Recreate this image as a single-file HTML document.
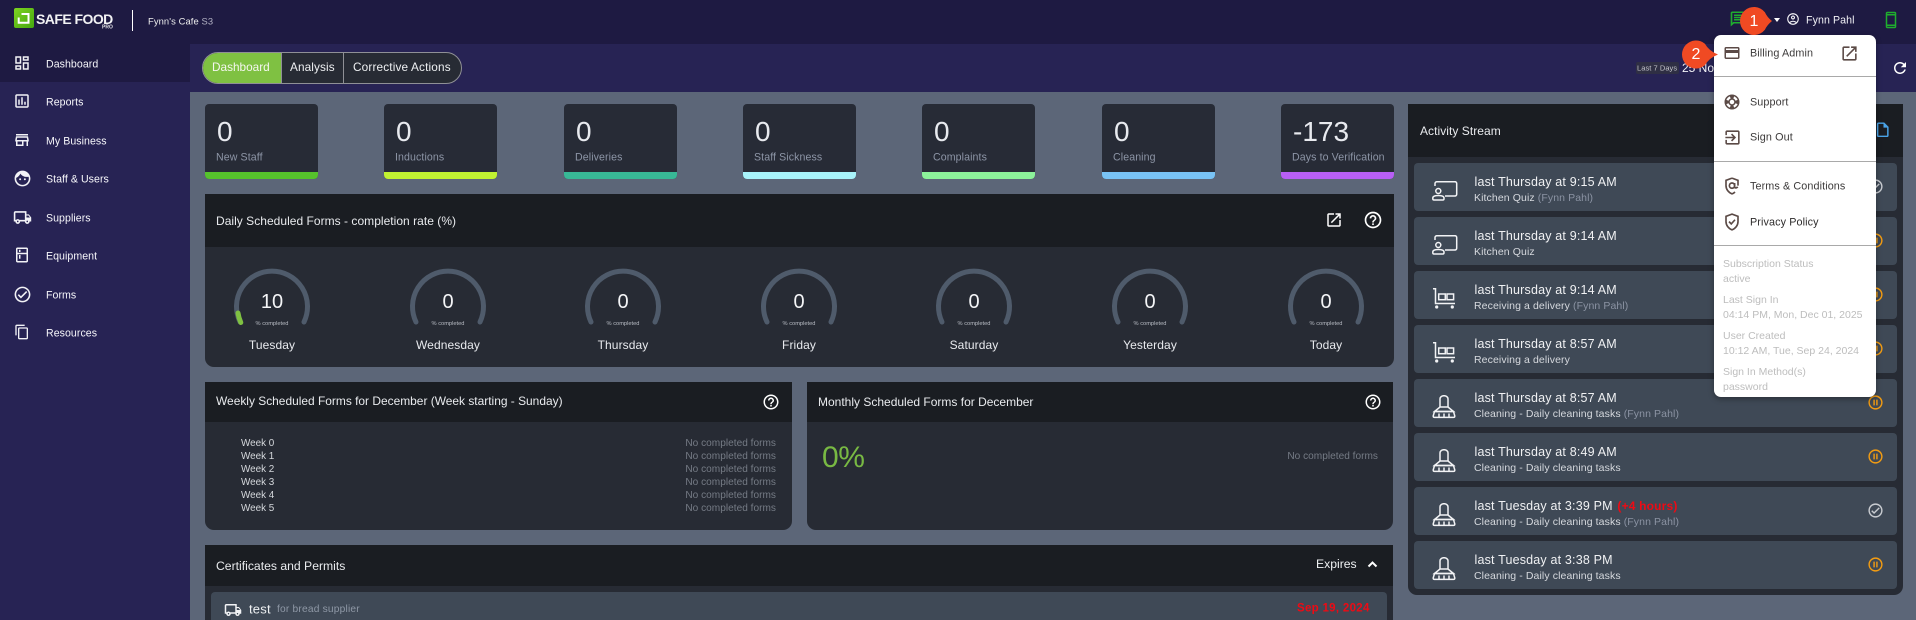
<!DOCTYPE html>
<html lang="en"><head><meta charset="utf-8"><title>Safe Food Pro Dashboard</title>
<style>
*{box-sizing:border-box}
html,body{margin:0;padding:0;width:1916px;height:620px;overflow:hidden;background:#5c6678;font-family:"Liberation Sans",Arial,sans-serif;color:#fff}
.a{position:absolute}
.t{position:absolute;white-space:nowrap;line-height:1;transform:translateY(-50%)}
svg.i{position:absolute;fill:currentColor;overflow:visible}
.nav{font-size:10.6px;font-weight:400;color:#f6f6fa;left:46px;letter-spacing:.05px}
.stat{position:absolute;top:104px;width:113px;height:75px;background:#272b36;border-radius:4px;overflow:hidden}
.stat b{position:absolute;left:0;right:0;bottom:0;height:7px}
.stat .n{font-size:28px;left:12px;top:28px;color:#e8eaef;font-weight:400}
.stat .l{font-size:10.6px;left:11px;top:54px;color:#8d95a6;letter-spacing:.1px}
.head{position:absolute;background:#1a1d22}
.body{position:absolute;background:#272b34;border-radius:0 0 9px 9px}
.title{font-size:12px;color:#e9ebee}
.g{position:absolute;top:260px;width:100px;height:100px}
.gn{font-size:20px;color:#f4f5f7;top:302px;transform:translate(-50%,-50%)}
.gs{font-size:5.7px;color:#b8bcc4;top:325px;transform:translate(-50%,-50%)}
.gd{font-size:12px;color:#e8eaee;top:345px;letter-spacing:.1px;transform:translate(-50%,-50%)}
.wk{font-size:9.9px;left:241px;color:#d5d8dc}
.nc{font-size:10.1px;color:#757b85;letter-spacing:.02px}
.row{position:absolute;left:1414px;width:483px;height:48px;background:#3f4956;border-radius:4px}
.row .t1{position:absolute;white-space:nowrap;left:60.5px;top:12px;font-size:12.5px;line-height:14px;letter-spacing:.18px;color:#f0f1f3}
.row .t2{position:absolute;white-space:nowrap;left:60px;top:29px;font-size:10.5px;line-height:13px;color:#d6d9de;letter-spacing:.1px}
.row .t2 i{font-style:normal;color:#8b93a3}
.row .ic{position:absolute;fill:none;stroke:#f2f3f5;stroke-width:1.5;overflow:visible}
.ic.q{left:18px;top:18px;width:26px;height:22px}
.ic.c{left:18.7px;top:17px;width:22px;height:21px}
.ic.b{left:18px;top:16px;width:24px;height:24px}
.row .st{position:absolute;left:452.5px;top:14.5px;width:17px;height:17px;fill:#c9ccd1}
.row .st.p{fill:#f39c12}
.mi{font-size:10.8px;color:#3c3a3a;left:1750px;letter-spacing:.1px}
.ms{position:absolute;fill:#5b4a46}
.hr{position:absolute;left:1714px;width:162px;height:1px;background:#a9a9a9}
.gy{font-size:10.5px;color:#bdbdbd;left:1723px;letter-spacing:0}
</style></head><body>
<svg width="0" height="0" style="position:absolute"><defs>
<symbol id="help" viewBox="0 0 24 24"><path d="M11 18h2v-2h-2v2zm1-16C6.480 2 2 6.480 2 12s4.480 10 10 10 10-4.480 10-10S17.520 2 12 2zm0 18c-4.410 0-8-3.590-8-8s3.590-8 8-8 8 3.590 8 8-3.590 8-8 8zm0-14c-2.210 0-4 1.790-4 4h2c0-1.100.9-2 2-2s2 .9 2 2c0 2-3 1.750-3 5h2c0-2.250 3-2.500 3-5 0-2.210-1.790-4-4-4z"/></symbol>
<symbol id="pause" viewBox="0 0 24 24"><path d="M9 16h2V8H9v8zm3-14C6.480 2 2 6.480 2 12s4.480 10 10 10 10-4.480 10-10S17.520 2 12 2zm0 18c-4.410 0-8-3.590-8-8s3.590-8 8-8 8 3.590 8 8-3.590 8-8 8zm1-4h2V8h-2v8z"/></symbol>
<symbol id="check" viewBox="0 0 24 24"><path d="M12 2C6.480 2 2 6.480 2 12s4.480 10 10 10 10-4.480 10-10S17.520 2 12 2zm0 18c-4.410 0-8-3.590-8-8s3.590-8 8-8 8 3.590 8 8-3.590 8-8 8zm4.590-12.420L10 14.170l-2.590-2.580L6 13l4 4 8-8z"/></symbol>
<symbol id="ext" viewBox="0 0 24 24"><path d="M19 19H5V5h7V3H5c-1.110 0-2 .9-2 2v14c0 1.100.89 2 2 2h14c1.100 0 2-.9 2-2v-7h-2v7zM14 3v2h3.590l-9.830 9.830 1.410 1.410L19 6.410V10h2V3h-7z"/></symbol>
<symbol id="truck" viewBox="0 0 24 24"><path d="M20 8h-3V4H3c-1.100 0-2 .9-2 2v11h2c0 1.660 1.340 3 3 3s3-1.340 3-3h6c0 1.660 1.340 3 3 3s3-1.340 3-3h2v-5l-3-4zm-.5 1.500l1.960 2.500H17V9.500h2.500zM6 18c-.55 0-1-.45-1-1s.45-1 1-1 1 .45 1 1-.45 1-1 1zm2.220-3c-.55-.61-1.330-1-2.220-1s-1.670.39-2.220 1H3V6h12v9H8.220zM18 18c-.55 0-1-.45-1-1s.45-1 1-1 1 .45 1 1-.45 1-1 1z"/></symbol>
<symbol id="quiz" viewBox="0 0 26 22"><path d="M3 5V2.500C3 1.400 3.900.7 5 .7h18c1 0 1.700.8 1.700 1.800v10.700c0 1-.7 1.800-1.700 1.800h-10" fill="none"/><circle cx="6.300" cy="10" r="2.500" fill="none"/><path d="M.8 17c0-1.800 2-2.500 5.500-2.500s5.700.7 5.700 2.500v.7c0 .7-.5 1.300-1.200 1.300H2c-.7 0-1.200-.6-1.200-1.300z" fill="none"/></symbol>
<symbol id="cart" viewBox="0 0 22 21"><path d="M0 .7h2.500V15.500H22" fill="none"/><rect x="5.700" y="6" width="6.600" height="5.700" fill="none"/><rect x="14" y="6" width="6.600" height="5.700" fill="none"/><circle cx="3.700" cy="19" r="1.600" fill="#f2f3f5" stroke="none"/><circle cx="19.300" cy="19" r="1.600" fill="#f2f3f5" stroke="none"/></symbol>
<symbol id="broom" viewBox="0 0 24 24"><path d="M8 12V4C8 2 9.800.7 12 .7s4 1.300 4 3.300V12" fill="none"/><path d="M8 12h8l5.500 4.500h-19z" fill="none"/><path d="M2.500 16.500h19l1.300 4.500c0 .8-.5 1.400-1.300 1.400h-19c-.8 0-1.300-.6-1.300-1.400z" fill="none"/><path d="M7 18.500v4M12 18.500v4M17 18.500v4" fill="none"/></symbol>
</defs></svg>

<!-- top bar and sidebar -->
<div class="a" style="left:0;top:0;width:1916px;height:44px;background:#1e1a42"></div>
<div class="a" style="left:0;top:44px;width:190px;height:576px;background:#272354"></div>
<div class="a" style="left:0;top:44px;width:190px;height:38px;background:#1e1a42"></div>
<div class="a" style="left:190px;top:44px;width:1726px;height:48px;background:#272354"></div>

<!-- logo -->
<div class="a" style="left:14px;top:8px;width:20px;height:20px;border-radius:2px;background:linear-gradient(135deg,#7ed321,#45a80f)"></div>
<svg class="a" style="left:14px;top:8px" width="20" height="20" viewBox="0 0 20 20"><path d="M7.500 6h7v8.700H4.700V9.500" fill="none" stroke="#fff" stroke-width="2"/></svg>
<div class="t" style="left:36px;top:18.5px;font-size:14px;font-weight:700;letter-spacing:-.55px;color:#f2f2f4">SAFE FOOD</div>
<div class="t" style="left:102px;top:28px;font-size:5px;font-weight:700;color:#e2e2e6">PRO</div>
<div class="a" style="left:132px;top:10px;width:1px;height:21px;background:#fff"></div>
<div class="t" style="left:148px;top:21px;font-size:9.4px;color:#eee;letter-spacing:.1px">Fynn's Cafe <span style="color:#b3b2c4">S3</span></div>

<!-- nav -->
<div class="t nav" style="top:64.5px">Dashboard</div>
<div class="t nav" style="top:103px">Reports</div>
<div class="t nav" style="top:141.5px">My Business</div>
<div class="t nav" style="top:180px">Staff &amp; Users</div>
<div class="t nav" style="top:218.5px">Suppliers</div>
<div class="t nav" style="top:257px">Equipment</div>
<div class="t nav" style="top:295.5px">Forms</div>
<div class="t nav" style="top:334px">Resources</div>
<svg class="i" style="left:13px;top:54px;color:#f2f2f6" width="18" height="18" viewBox="0 0 24 24"><path d="M19 5v2h-4V5h4M9 5v6H5V5h4m10 8v6h-4v-6h4M9 17v2H5v-2h4M21 3h-8v6h8V3zM11 3H3v10h8V3zm10 8h-8v10h8V11zm-10 4H3v6h8v-6z"/></svg>
<svg class="i" style="left:13px;top:92px;color:#f2f2f6" width="18" height="18" viewBox="0 0 24 24"><path d="M9 17H7v-7h2v7zm4 0h-2V7h2v10zm4 0h-2v-4h2v4zm2 2H5V5h14v14zm0-16H5c-1.100 0-2 .9-2 2v14c0 1.100.9 2 2 2h14c1.100 0 2-.9 2-2V5c0-1.100-.9-2-2-2z"/></svg>
<svg class="i" style="left:13px;top:131px;color:#f2f2f6" width="18" height="18" viewBox="0 0 24 24"><path d="M20 4H4v2h16V4zm1 10v-2l-1-5H4l-1 5v2h1v6h10v-6h4v6h2v-6h1zm-9 4H6v-4h6v4zm-6.960-6l.6-3h12.720l.6 3H5.040z"/></svg>
<svg class="i" style="left:12.5px;top:168.5px;color:#f2f2f6" width="19" height="19" viewBox="0 0 24 24"><path d="M9 11.750c-.69 0-1.250.56-1.250 1.250s.56 1.250 1.250 1.250 1.250-.56 1.250-1.250-.56-1.250-1.250-1.250zm6 0c-.69 0-1.250.56-1.250 1.250s.56 1.250 1.250 1.250 1.250-.56 1.250-1.250-.56-1.250-1.250-1.250zM12 2C6.480 2 2 6.480 2 12s4.480 10 10 10 10-4.480 10-10S17.520 2 12 2zm0 18c-4.410 0-8-3.590-8-8 0-.29.02-.58.05-.86 2.360-1.050 4.230-2.980 5.210-5.370C11.070 8.330 14.050 10 17.420 10c.78 0 1.530-.09 2.250-.26.21.71.33 1.470.33 2.260 0 4.410-3.590 8-8 8z"/></svg>
<svg class="i" style="left:12.5px;top:207.5px;color:#f2f2f6" width="19" height="19" viewBox="0 0 24 24"><use href="#truck"/></svg>
<svg class="i" style="left:13px;top:246px;color:#f2f2f6" width="18" height="18" viewBox="0 0 24 24"><path d="M18 2.010L6 2c-1.100 0-2 .89-2 2v16c0 1.100.9 2 2 2h12c1.100 0 2-.9 2-2V4c0-1.110-.9-1.990-2-1.990zM18 20H6v-9.020h12V20zm0-11H6V4h12v5zM8 5h2v3H8zm0 7h2v5H8z"/></svg>
<svg class="i" style="left:12.5px;top:284.5px;color:#f2f2f6" width="19" height="19" viewBox="0 0 24 24"><use href="#check"/></svg>
<svg class="i" style="left:14px;top:324px;color:#f2f2f6" width="16" height="16" viewBox="0 0 24 24"><path d="M16 1H4c-1.100 0-2 .9-2 2v14h2V3h12V1zm3 4H8c-1.100 0-2 .9-2 2v14c0 1.100.9 2 2 2h11c1.100 0 2-.9 2-2V7c0-1.100-.9-2-2-2zm0 16H8V7h11v14z"/></svg>

<!-- tabs -->
<div class="a" style="left:202px;top:52px;width:260px;height:32px;border-radius:16px;background:#272b34;border:1px solid #8f9096;overflow:hidden">
<div class="a" style="left:0;top:0;width:78px;height:30px;background:#7fc142"></div>
<div class="a" style="left:78px;top:0;width:1px;height:30px;background:#8f9096"></div>
<div class="a" style="left:140px;top:0;width:1px;height:30px;background:#8f9096"></div>
</div>
<div class="t" style="left:212px;top:68px;font-size:11.8px;color:#f4f6ee">Dashboard</div>
<div class="t" style="left:290px;top:68px;font-size:11.8px;color:#eef0f2;letter-spacing:.1px">Analysis</div>
<div class="t" style="left:353px;top:68px;font-size:11.8px;color:#eef0f2;letter-spacing:.15px">Corrective Actions</div>

<!-- date -->
<div class="a" style="left:1636px;top:62px;width:43px;height:12px;border-radius:2px;background:#2f2f44"></div>
<div class="t" style="left:1637px;top:68px;font-size:7.5px;color:#c5c5cb;letter-spacing:.05px">Last 7 Days</div>
<div class="t" style="left:1682px;top:68px;font-size:12px;color:#f2f2f6">25 Nov</div>
<svg class="i" style="left:1891px;top:59px;color:#fff" width="18" height="18" viewBox="0 0 24 24"><path d="M17.650 6.350C16.200 4.900 14.210 4 12 4c-4.420 0-7.990 3.580-7.990 8s3.570 8 7.990 8c3.730 0 6.840-2.550 7.730-6h-2.080c-.82 2.330-3.040 4-5.650 4-3.310 0-6-2.690-6-6s2.690-6 6-6c1.660 0 3.140.69 4.220 1.780L13 11h7V4l-2.350 2.350z"/></svg>

<!-- stats -->
<div class="stat" style="left:205px"><span class="t n">0</span><span class="t l">New Staff</span><b style="background:#56c22c"></b></div>
<div class="stat" style="left:384px"><span class="t n">0</span><span class="t l">Inductions</span><b style="background:#c1f232"></b></div>
<div class="stat" style="left:564px"><span class="t n">0</span><span class="t l">Deliveries</span><b style="background:#38b896"></b></div>
<div class="stat" style="left:743px"><span class="t n">0</span><span class="t l">Staff Sickness</span><b style="background:#a8f3fa"></b></div>
<div class="stat" style="left:922px"><span class="t n">0</span><span class="t l">Complaints</span><b style="background:#8cf29a"></b></div>
<div class="stat" style="left:1102px"><span class="t n">0</span><span class="t l">Cleaning</span><b style="background:#79c3f5"></b></div>
<div class="stat" style="left:1281px"><span class="t n">-173</span><span class="t l">Days to Verification</span><b style="background:#b85ff5"></b></div>

<!-- daily -->
<div class="head" style="left:205px;top:194px;width:1189px;height:53px"></div>
<div class="body" style="left:205px;top:247px;width:1189px;height:120px"></div>
<div class="t title" style="left:216px;top:220.5px;letter-spacing:.03px">Daily Scheduled Forms - completion rate (%)</div>
<svg class="i" style="left:1325px;top:211px;color:#fff" width="18" height="18" viewBox="0 0 24 24"><use href="#ext"/></svg>
<svg class="i" style="left:1363px;top:210px;color:#fff" width="20" height="20" viewBox="0 0 24 24"><use href="#help"/></svg>

<svg class="a" style="left:0;top:0" width="1916" height="620" fill="none" stroke="#4f5b6b" stroke-width="5" stroke-linecap="round">
<path d="M240 322A35.500 35.500 0 1 1 304 322"/>
<path d="M416 322A35.500 35.500 0 1 1 480 322"/>
<path d="M591 322A35.500 35.500 0 1 1 655 322"/>
<path d="M767 322A35.500 35.500 0 1 1 831 322"/>
<path d="M942 322A35.500 35.500 0 1 1 1006 322"/>
<path d="M1118 322A35.500 35.500 0 1 1 1182 322"/>
<path d="M1294 322A35.500 35.500 0 1 1 1358 322"/>
<path d="M240.800 322.500A35.500 35.500 0 0 1 238 313" stroke="#7fc142"/>
</svg>
<div class="t gn" style="left:272px">10</div><div class="t gs" style="left:272px">% completed</div><div class="t gd" style="left:272px">Tuesday</div>
<div class="t gn" style="left:448px">0</div><div class="t gs" style="left:448px">% completed</div><div class="t gd" style="left:448px">Wednesday</div>
<div class="t gn" style="left:623px">0</div><div class="t gs" style="left:623px">% completed</div><div class="t gd" style="left:623px">Thursday</div>
<div class="t gn" style="left:799px">0</div><div class="t gs" style="left:799px">% completed</div><div class="t gd" style="left:799px">Friday</div>
<div class="t gn" style="left:974px">0</div><div class="t gs" style="left:974px">% completed</div><div class="t gd" style="left:974px">Saturday</div>
<div class="t gn" style="left:1150px">0</div><div class="t gs" style="left:1150px">% completed</div><div class="t gd" style="left:1150px">Yesterday</div>
<div class="t gn" style="left:1326px">0</div><div class="t gs" style="left:1326px">% completed</div><div class="t gd" style="left:1326px">Today</div>

<!-- weekly -->
<div class="head" style="left:205px;top:382px;width:587px;height:40px"></div>
<div class="body" style="left:205px;top:422px;width:587px;height:108px"></div>
<div class="t title" style="left:216px;top:402px;font-size:11.95px">Weekly Scheduled Forms for December (Week starting - Sunday)</div>
<svg class="i" style="left:762px;top:393px;color:#fff" width="18" height="18" viewBox="0 0 24 24"><use href="#help"/></svg>
<div class="t wk" style="top:444px">Week 0</div><div class="t wk" style="top:457px">Week 1</div><div class="t wk" style="top:470px">Week 2</div><div class="t wk" style="top:483px">Week 3</div><div class="t wk" style="top:496px">Week 4</div><div class="t wk" style="top:509px">Week 5</div>
<div class="t nc" style="right:1140px;top:444px">No completed forms</div><div class="t nc" style="right:1140px;top:457px">No completed forms</div><div class="t nc" style="right:1140px;top:470px">No completed forms</div><div class="t nc" style="right:1140px;top:483px">No completed forms</div><div class="t nc" style="right:1140px;top:496px">No completed forms</div><div class="t nc" style="right:1140px;top:509px">No completed forms</div>

<!-- monthly -->
<div class="head" style="left:807px;top:382px;width:586px;height:40px"></div>
<div class="body" style="left:807px;top:422px;width:586px;height:108px"></div>
<div class="t title" style="left:818px;top:402px">Monthly Scheduled Forms for December</div>
<svg class="i" style="left:1364px;top:393px;color:#fff" width="18" height="18" viewBox="0 0 24 24"><use href="#help"/></svg>
<div class="t" style="left:822px;top:458px;font-size:30px;color:#78b943;letter-spacing:-.4px">0%</div>
<div class="t nc" style="right:538px;top:457px">No completed forms</div>

<!-- certificates -->
<div class="head" style="left:205px;top:545px;width:1188px;height:41px"></div>
<div class="a" style="left:205px;top:586px;width:1188px;height:34px;background:#272b34"></div>
<div class="a" style="left:211px;top:592px;width:1176px;height:28px;background:#3f4956;border-radius:4px 4px 0 0"></div>
<div class="t title" style="left:216px;top:565.5px;font-size:12.2px">Certificates and Permits</div>
<div class="t" style="left:1316px;top:564px;font-size:12.2px;color:#eef0f2">Expires</div>
<svg class="a" style="left:1367px;top:560px" width="11" height="8" viewBox="0 0 11 8"><path d="M1.500 6.500l4-4 4 4" fill="none" stroke="#fff" stroke-width="2"/></svg>
<svg class="i" style="left:224px;top:601px;color:#f2f3f5" width="18" height="18" viewBox="0 0 24 24"><use href="#truck"/></svg>
<div class="t" style="left:249px;top:609px;font-size:13px;color:#eef0f2;letter-spacing:.2px">test</div>
<div class="t" style="left:277px;top:609.5px;font-size:10.2px;color:#8f98a6;letter-spacing:.2px">for bread supplier</div>
<div class="t" style="left:1297px;top:609px;font-size:11.5px;font-weight:700;color:#ee0a14;letter-spacing:.3px">Sep 19, 2024</div>

<!-- activity -->
<div class="a" style="left:1408px;top:104px;width:495px;height:491px;background:#272b34;border-radius:0 0 9px 9px"></div>
<div class="head" style="left:1408px;top:104px;width:495px;height:53px"></div>
<div class="t title" style="left:1420px;top:130.5px;letter-spacing:.05px">Activity Stream</div>
<svg class="i" style="left:1874px;top:121px;color:#4aa3e8" width="17.5" height="17.5" viewBox="0 0 24 24"><path d="M14 2H6c-1.100 0-2 .9-2 2v16c0 1.100.9 2 2 2h12c1.100 0 2-.9 2-2V8l-6-6zm4 18H6V4h7v5h5v11z"/></svg>

<div class="row" style="top:163px"><svg class="ic q"><use href="#quiz"/></svg><div class="t1">last Thursday at 9:15 AM</div><div class="t2">Kitchen Quiz <i>(Fynn Pahl)</i></div><svg class="st"><use href="#check"/></svg></div>
<div class="row" style="top:217px"><svg class="ic q"><use href="#quiz"/></svg><div class="t1">last Thursday at 9:14 AM</div><div class="t2">Kitchen Quiz</div><svg class="st p"><use href="#pause"/></svg></div>
<div class="row" style="top:271px"><svg class="ic c"><use href="#cart"/></svg><div class="t1">last Thursday at 9:14 AM</div><div class="t2">Receiving a delivery <i>(Fynn Pahl)</i></div><svg class="st p"><use href="#pause"/></svg></div>
<div class="row" style="top:325px"><svg class="ic c"><use href="#cart"/></svg><div class="t1">last Thursday at 8:57 AM</div><div class="t2">Receiving a delivery</div><svg class="st p"><use href="#pause"/></svg></div>
<div class="row" style="top:379px"><svg class="ic b"><use href="#broom"/></svg><div class="t1">last Thursday at 8:57 AM</div><div class="t2">Cleaning - Daily cleaning tasks <i>(Fynn Pahl)</i></div><svg class="st p"><use href="#pause"/></svg></div>
<div class="row" style="top:433px"><svg class="ic b"><use href="#broom"/></svg><div class="t1">last Thursday at 8:49 AM</div><div class="t2">Cleaning - Daily cleaning tasks</div><svg class="st p"><use href="#pause"/></svg></div>
<div class="row" style="top:487px"><svg class="ic b"><use href="#broom"/></svg><div class="t1">last Tuesday at 3:39 PM <b style="color:#ee0a14;margin-left:1px;font-size:12px">(+4 hours)</b></div><div class="t2">Cleaning - Daily cleaning tasks <i>(Fynn Pahl)</i></div><svg class="st"><use href="#check"/></svg></div>
<div class="row" style="top:541px"><svg class="ic b"><use href="#broom"/></svg><div class="t1">last Tuesday at 3:38 PM</div><div class="t2">Cleaning - Daily cleaning tasks</div><svg class="st p"><use href="#pause"/></svg></div>

<!-- top right -->
<svg class="i" style="left:1729px;top:10px;color:#1fae2e" width="20" height="18" viewBox="0 0 24 24" preserveAspectRatio="none"><path d="M20 2H4c-1.100 0-2 .9-2 2v18l4-4h14c1.100 0 2-.9 2-2V4c0-1.100-.9-2-2-2zm0 14H5.170L4 17.170V4h16v12zM6 12h12v2H6zm0-3h12v2H6zm0-3h12v2H6z"/></svg>
<svg class="a" style="left:1774px;top:18px" width="6" height="4" viewBox="0 0 6 4"><path d="M0 0h6L3 4z" fill="#fff"/></svg>
<svg class="i" style="left:1786px;top:12px;color:#f2f2f6" width="14" height="14" viewBox="0 0 24 24"><path d="M12 2C6.480 2 2 6.480 2 12s4.480 10 10 10 10-4.480 10-10S17.520 2 12 2zM7.350 18.500C8.660 17.560 10.260 17 12 17s3.340.56 4.650 1.500C15.340 19.440 13.740 20 12 20s-3.340-.56-4.650-1.500zm10.790-1.380C16.450 15.800 14.320 15 12 15s-4.450.8-6.140 2.120C4.700 15.730 4 13.950 4 12c0-4.420 3.580-8 8-8s8 3.580 8 8c0 1.950-.7 3.730-1.860 5.120zM12 6c-1.930 0-3.500 1.570-3.500 3.500S10.070 13 12 13s3.500-1.570 3.500-3.500S13.930 6 12 6zm0 5c-.83 0-1.500-.67-1.500-1.500S11.170 8 12 8s1.500.67 1.500 1.500S12.830 11 12 11z"/></svg>
<div class="t" style="left:1806px;top:20.5px;font-size:10.6px;color:#f0f0f5;letter-spacing:.1px">Fynn Pahl</div>
<svg class="i" style="left:1882px;top:11px;color:#1fae2e" width="18" height="18" viewBox="0 0 24 24"><path d="M17 1.010L7 1c-1.100 0-2 .9-2 2v18c0 1.100.9 2 2 2h10c1.100 0 2-.9 2-2V3c0-1.100-.9-1.990-2-1.990zM17 21H7v-1h10v1zm0-3H7V6h10v12zm0-14H7V3h10v1z"/></svg>

<!-- menu -->
<div class="a" style="left:1714px;top:35px;width:162px;height:362px;background:#fff;border-radius:7px;box-shadow:0 2px 6px rgba(0,0,0,.35)"></div>
<svg class="ms" style="left:1723px;top:44px" width="18" height="18" viewBox="0 0 24 24"><path d="M20 4H4c-1.110 0-1.990.89-1.990 2L2 18c0 1.110.89 2 2 2h16c1.110 0 2-.89 2-2V6c0-1.110-.89-2-2-2zm0 14H4v-6h16v6zm0-10H4V6h16v2z"/></svg>
<svg class="ms" style="left:1839.5px;top:43.5px" width="19" height="19" viewBox="0 0 24 24"><use href="#ext"/></svg>
<div class="t mi" style="top:54px">Billing Admin</div>
<div class="hr" style="top:76px"></div>
<svg class="ms" style="left:1723px;top:92.5px" width="18" height="18" viewBox="0 0 24 24"><path d="M12 2C6.480 2 2 6.480 2 12s4.480 10 10 10 10-4.480 10-10S17.520 2 12 2zm7.460 7.120l-2.780 1.150c-.51-1.360-1.580-2.440-2.950-2.940l1.150-2.780c2.100.8 3.770 2.470 4.580 4.570zM12 15c-1.660 0-3-1.340-3-3s1.340-3 3-3 3 1.340 3 3-1.340 3-3 3zM9.130 4.540l1.170 2.780c-1.380.5-2.470 1.590-2.980 2.970L4.540 9.130c.81-2.110 2.480-3.780 4.590-4.590zM4.540 14.870l2.780-1.150c.51 1.380 1.590 2.460 2.970 2.960l-1.170 2.780c-2.100-.81-3.770-2.480-4.580-4.590zm10.340 4.590l-1.150-2.780c1.370-.51 2.450-1.590 2.950-2.970l2.780 1.170c-.81 2.100-2.480 3.770-4.580 4.580z"/></svg>
<div class="t mi" style="top:102.5px">Support</div>
<svg class="ms" style="left:1722.5px;top:127.5px" width="19" height="19" viewBox="0 0 24 24"><path d="M10.090 15.590L11.500 17l5-5-5-5-1.410 1.410L12.670 11H3v2h9.670l-2.580 2.590zM19 3H5c-1.110 0-2 .9-2 2v4h2V5h14v14H5v-4H3v4c0 1.100.89 2 2 2h14c1.100 0 2-.9 2-2V5c0-1.100-.9-2-2-2z"/></svg>
<div class="t mi" style="top:138px">Sign Out</div>
<div class="hr" style="top:161px"></div>
<svg class="a" style="left:1723px;top:177px" width="18" height="18" viewBox="0 0 24 24" fill="none" stroke="#5b4a46" stroke-width="2.200"><path d="M12 1.500 4 4.500v7c0 5 3.400 9.300 8 11 1.500-.5 3-1.500 4-2.500"/><path d="M12 1.500l8 3v7"/><circle cx="12" cy="11.500" r="3.500"/><path d="M15.500 8v5c0 2 3 2 4 0"/></svg>
<div class="t mi" style="top:187px">Terms &amp; Conditions</div>
<svg class="a" style="left:1723px;top:213px" width="18" height="18" viewBox="0 0 24 24" fill="none" stroke="#5b4a46" stroke-width="2.200"><path d="M12 1.500 4 4.500v7c0 5 3.400 9.300 8 11 4.600-1.700 8-6 8-11v-7z"/><path d="M8 11.500l3 3 5-5.500"/></svg>
<div class="t mi" style="top:223px;color:#2e2c2c">Privacy Policy</div>
<div class="hr" style="top:245px"></div>
<div class="t gy" style="top:264px">Subscription Status</div>
<div class="t gy" style="top:279px">active</div>
<div class="t gy" style="top:300px">Last Sign In</div>
<div class="t gy" style="top:315px">04:14 PM, Mon, Dec 01, 2025</div>
<div class="t gy" style="top:336px">User Created</div>
<div class="t gy" style="top:351px">10:12 AM, Tue, Sep 24, 2024</div>
<div class="t gy" style="top:372px">Sign In Method(s)</div>
<div class="t gy" style="top:387px">password</div>

<!-- annotation badges -->
<svg class="a" style="left:0;top:0" width="1916" height="100" viewBox="0 0 1916 100">
<path d="M1764.900 12.200Q1767 17 1772 21Q1767 25 1764.900 29.800A14 14 0 1 1 1764.900 12.200z" fill="#f04a23"/>
<path d="M1704.900 43.700Q1709 51 1718 54.500Q1709 58 1704.900 65.300A14 14 0 1 1 1704.900 43.700z" fill="#f04a23"/>
</svg>
<div class="t" style="left:1754px;top:21.5px;font-size:16px;color:#fff;transform:translate(-50%,-50%)">1</div>
<div class="t" style="left:1696px;top:55px;font-size:16px;color:#fff;transform:translate(-50%,-50%)">2</div>
</body></html>
